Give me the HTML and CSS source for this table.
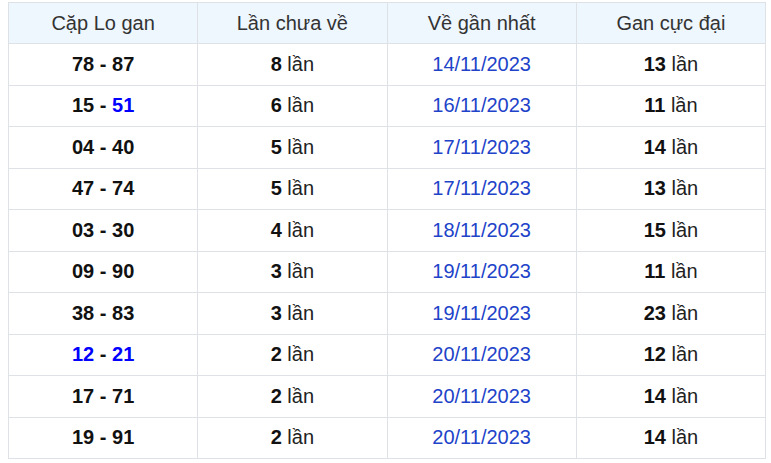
FILE: index.html
```html
<!DOCTYPE html>
<html lang="vi">
<head>
<meta charset="utf-8">
<link rel="stylesheet" href="styles.css">
</head>
<body>
<table class="gan-table">
  <thead>
    <tr><th>Cặp Lo gan</th><th>Lần chưa về</th><th>Về gần nhất</th><th>Gan cực đại</th></tr>
  </thead>
  <tbody>
    <tr><td class="pair">78 - 87</td><td><b>8</b> lần</td><td class="date">14/11/2023</td><td><b>13</b> lần</td></tr>
    <tr><td class="pair">15 - <span class="hl">51</span></td><td><b>6</b> lần</td><td class="date">16/11/2023</td><td><b>11</b> lần</td></tr>
    <tr><td class="pair">04 - 40</td><td><b>5</b> lần</td><td class="date">17/11/2023</td><td><b>14</b> lần</td></tr>
    <tr><td class="pair">47 - 74</td><td><b>5</b> lần</td><td class="date">17/11/2023</td><td><b>13</b> lần</td></tr>
    <tr><td class="pair">03 - 30</td><td><b>4</b> lần</td><td class="date">18/11/2023</td><td><b>15</b> lần</td></tr>
    <tr><td class="pair">09 - 90</td><td><b>3</b> lần</td><td class="date">19/11/2023</td><td><b>11</b> lần</td></tr>
    <tr><td class="pair">38 - 83</td><td><b>3</b> lần</td><td class="date">19/11/2023</td><td><b>23</b> lần</td></tr>
    <tr><td class="pair"><span class="hl">12</span> - <span class="hl">21</span></td><td><b>2</b> lần</td><td class="date">20/11/2023</td><td><b>12</b> lần</td></tr>
    <tr><td class="pair">17 - 71</td><td><b>2</b> lần</td><td class="date">20/11/2023</td><td><b>14</b> lần</td></tr>
    <tr><td class="pair">19 - 91</td><td><b>2</b> lần</td><td class="date">20/11/2023</td><td><b>14</b> lần</td></tr>
  </tbody>
</table>
</body>
</html>
```

FILE: styles.css
```css
html, body {
  background: #ffffff;
}
body {
  margin: 2px 0 0 8px;
  font-family: "Liberation Sans", Arial, sans-serif;
  font-size: 20px;
  color: #222;
}
.gan-table {
  width: 758px;
  border-collapse: collapse;
  table-layout: fixed;
}
.gan-table th,
.gan-table td {
  border: 1px solid #dee2e6;
  text-align: center;
  vertical-align: middle;
  padding: 0;
}
.gan-table th {
  background: #eef6fe;
  font-weight: normal;
  color: #333;
  height: 40px;
}
.gan-table td {
  height: 40.5px;
  color: #222;
}
.gan-table td b {
  color: #111;
}
.gan-table .pair {
  font-weight: bold;
  color: #111;
}
.gan-table .hl {
  color: #0000ff;
}
.gan-table .date {
  color: #2143c9;
}
```
